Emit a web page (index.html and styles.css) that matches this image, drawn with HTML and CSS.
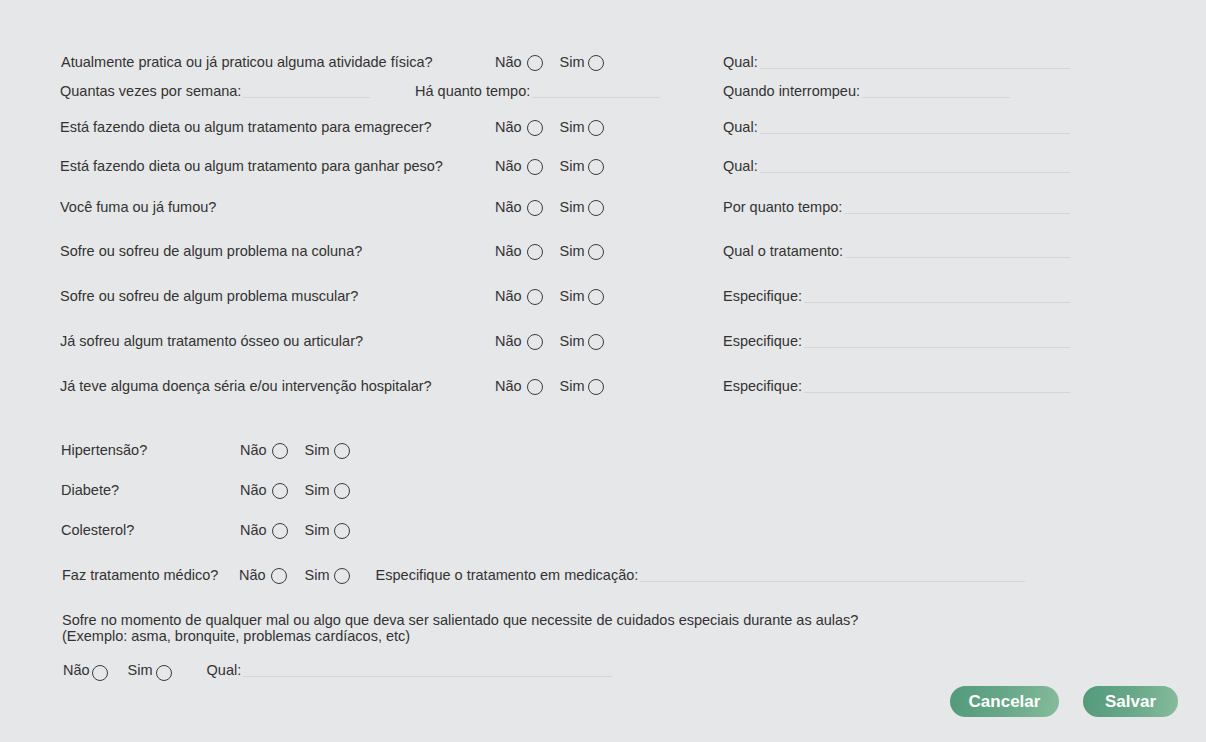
FILE: index.html
```html
<!DOCTYPE html>
<html lang="pt">
<head>
<meta charset="utf-8">
<title>Anamnese</title>
<link rel="stylesheet" href="styles.css">
</head>
<body>
<form class="form">
  <section class="block main">
    <div class="row q3">
      <span class="q">Atualmente pratica ou já praticou alguma atividade física?</span>
      <span class="yn"><span class="opt">Não</span><i class="radio"></i><span class="opt sim">Sim</span><i class="radio"></i></span>
      <span class="field f-right"><span>Qual:</span><span class="line"></span></span>
    </div>
    <div class="row r2">
      <span class="field fa"><span>Quantas vezes por semana:</span><span class="line"></span></span>
      <span class="field fb"><span>Há quanto tempo:</span><span class="line"></span></span>
      <span class="field fc"><span>Quando interrompeu:</span><span class="line"></span></span>
    </div>
    <div class="row q3">
      <span class="q">Está fazendo dieta ou algum tratamento para emagrecer?</span>
      <span class="yn"><span class="opt">Não</span><i class="radio"></i><span class="opt sim">Sim</span><i class="radio"></i></span>
      <span class="field f-right"><span>Qual:</span><span class="line"></span></span>
    </div>
    <div class="row q3">
      <span class="q">Está fazendo dieta ou algum tratamento para ganhar peso?</span>
      <span class="yn"><span class="opt">Não</span><i class="radio"></i><span class="opt sim">Sim</span><i class="radio"></i></span>
      <span class="field f-right"><span>Qual:</span><span class="line"></span></span>
    </div>
    <div class="row q3">
      <span class="q">Você fuma ou já fumou?</span>
      <span class="yn"><span class="opt">Não</span><i class="radio"></i><span class="opt sim">Sim</span><i class="radio"></i></span>
      <span class="field f-right"><span>Por quanto tempo:</span><span class="line"></span></span>
    </div>
    <div class="row q3">
      <span class="q">Sofre ou sofreu de algum problema na coluna?</span>
      <span class="yn"><span class="opt">Não</span><i class="radio"></i><span class="opt sim">Sim</span><i class="radio"></i></span>
      <span class="field f-right"><span>Qual o tratamento:</span><span class="line"></span></span>
    </div>
    <div class="row q3">
      <span class="q">Sofre ou sofreu de algum problema muscular?</span>
      <span class="yn"><span class="opt">Não</span><i class="radio"></i><span class="opt sim">Sim</span><i class="radio"></i></span>
      <span class="field f-right"><span>Especifique:</span><span class="line"></span></span>
    </div>
    <div class="row q3">
      <span class="q">Já sofreu algum tratamento ósseo ou articular?</span>
      <span class="yn"><span class="opt">Não</span><i class="radio"></i><span class="opt sim">Sim</span><i class="radio"></i></span>
      <span class="field f-right"><span>Especifique:</span><span class="line"></span></span>
    </div>
    <div class="row q3">
      <span class="q">Já teve alguma doença séria e/ou intervenção hospitalar?</span>
      <span class="yn"><span class="opt">Não</span><i class="radio"></i><span class="opt sim">Sim</span><i class="radio"></i></span>
      <span class="field f-right"><span>Especifique:</span><span class="line"></span></span>
    </div>
  </section>

  <section class="block health">
    <div class="row h2">
      <span class="q">Hipertensão?</span>
      <span class="yn"><span class="opt">Não</span><i class="radio"></i><span class="opt sim">Sim</span><i class="radio"></i></span>
    </div>
    <div class="row h2">
      <span class="q">Diabete?</span>
      <span class="yn"><span class="opt">Não</span><i class="radio"></i><span class="opt sim">Sim</span><i class="radio"></i></span>
    </div>
    <div class="row h2">
      <span class="q">Colesterol?</span>
      <span class="yn"><span class="opt">Não</span><i class="radio"></i><span class="opt sim">Sim</span><i class="radio"></i></span>
    </div>
    <div class="row h2 treat">
      <span class="q">Faz tratamento médico?</span>
      <span class="yn"><span class="opt">Não</span><i class="radio"></i><span class="opt sim">Sim</span><i class="radio"></i></span>
      <span class="field f-med"><span>Especifique o tratamento em medicação:</span><span class="line"></span></span>
    </div>
  </section>

  <section class="block special">
    <p class="long">Sofre no momento de qualquer mal ou algo que deva ser salientado que necessite de cuidados especiais durante as aulas?<br>(Exemplo: asma, bronquite, problemas cardíacos, etc)</p>
    <div class="row last">
      <span class="yn tight"><span class="opt">Não</span><i class="radio"></i><span class="opt sim">Sim</span><i class="radio"></i></span>
      <span class="field f-qual"><span>Qual:</span><span class="line"></span></span>
    </div>
  </section>

  <div class="actions">
    <button type="button" class="btn">Cancelar</button>
    <button type="button" class="btn">Salvar</button>
  </div>
</form>
</body>
</html>
```

FILE: styles.css
```css
* { box-sizing: border-box; }

html, body {
  margin: 0;
  padding: 0;
  background: #e6e7e8;
}

body {
  font-family: "Liberation Sans", Arial, sans-serif;
  font-size: 14.5px;
  color: #333333;
  width: 1206px;
  height: 742px;
  overflow: hidden;
}

.form {
  padding: 52px 28px 0 60px;
  display: flex;
  flex-direction: column;
}

.row {
  height: 20px;
  line-height: 20px;
  display: flex;
  align-items: center;
  white-space: nowrap;
}

.main .q3 {
  display: grid;
  grid-template-columns: 435px 228px 347px;
  align-items: center;
}

.main .row:nth-child(1) .q { padding-left: 1px; }
.main .row:nth-child(2) { margin-top: 9px; }
.main .row:nth-child(3) { margin-top: 16px; }
.main .row:nth-child(4) { margin-top: 19px; }
.main .row:nth-child(5) { margin-top: 21px; }
.main .row:nth-child(6) { margin-top: 24px; }
.main .row:nth-child(7) { margin-top: 25px; }
.main .row:nth-child(8) { margin-top: 25px; }
.main .row:nth-child(9) { margin-top: 25px; }

.yn {
  display: flex;
  align-items: center;
}

.yn .opt.sim { margin-left: 17px; }

.radio {
  display: inline-block;
  width: 16px;
  height: 16px;
  border: 1px solid #3c3c3c;
  border-radius: 50%;
  margin-left: 5px;
  margin-top: 2px;
}

.yn .sim + .radio { margin-left: 3px; }

.field {
  display: flex;
  align-items: center;
}

.line {
  flex: 1;
  height: 1px;
  background: #d5d6d8;
  margin-top: 12px;
  margin-left: 2px;
}

.r2 { display: flex; }
.r2 .fa { width: 310px; margin-right: 45px; }
.r2 .fb { width: 245px; margin-right: 63px; }
.r2 .fc { width: 287px; }

/* health block */
.health {
  margin-top: 44px;
  display: flex;
  flex-direction: column;
}

.health .h2 {
  display: grid;
  grid-template-columns: 179px auto 1fr;
  padding-left: 1px;
}

.health .yn .sim + .radio { margin-left: 4px; }

.health .h2 + .h2 { margin-top: 20px; }
.health .treat { margin-top: 25px !important; grid-template-columns: 177px auto 1fr; padding-left: 2px; }
.health .treat .opt.sim { margin-left: 18px; }

.f-med { margin-left: 26px; width: 649px; }

/* special block */
.special {
  margin-top: 27px;
  padding-left: 2px;
}

.long {
  margin: 0;
  line-height: 16px;
}

.last {
  margin-top: 16px;
  padding-left: 1px;
}

.yn.tight .radio { margin-left: 2px; margin-top: 6px; }
.yn.tight .opt.sim { margin-left: 20px; }
.yn.tight .sim + .radio { margin-left: 3px; }

.f-qual { margin-left: 35px; width: 405px; }

/* actions */
.actions {
  margin-top: 6px;
  display: flex;
  justify-content: flex-end;
  gap: 24px;
}

.btn {
  height: 31px;
  border: none;
  border-radius: 16px;
  background: linear-gradient(100deg, #529a7b 0%, #6aa98a 55%, #86bc9b 100%);
  color: #ffffff;
  font-family: "Liberation Sans", Arial, sans-serif;
  font-weight: bold;
  font-size: 17px;
  padding: 0 18px;
  cursor: pointer;
}

.btn:first-child { width: 109px; }
.btn:last-child { width: 95px; }
```
